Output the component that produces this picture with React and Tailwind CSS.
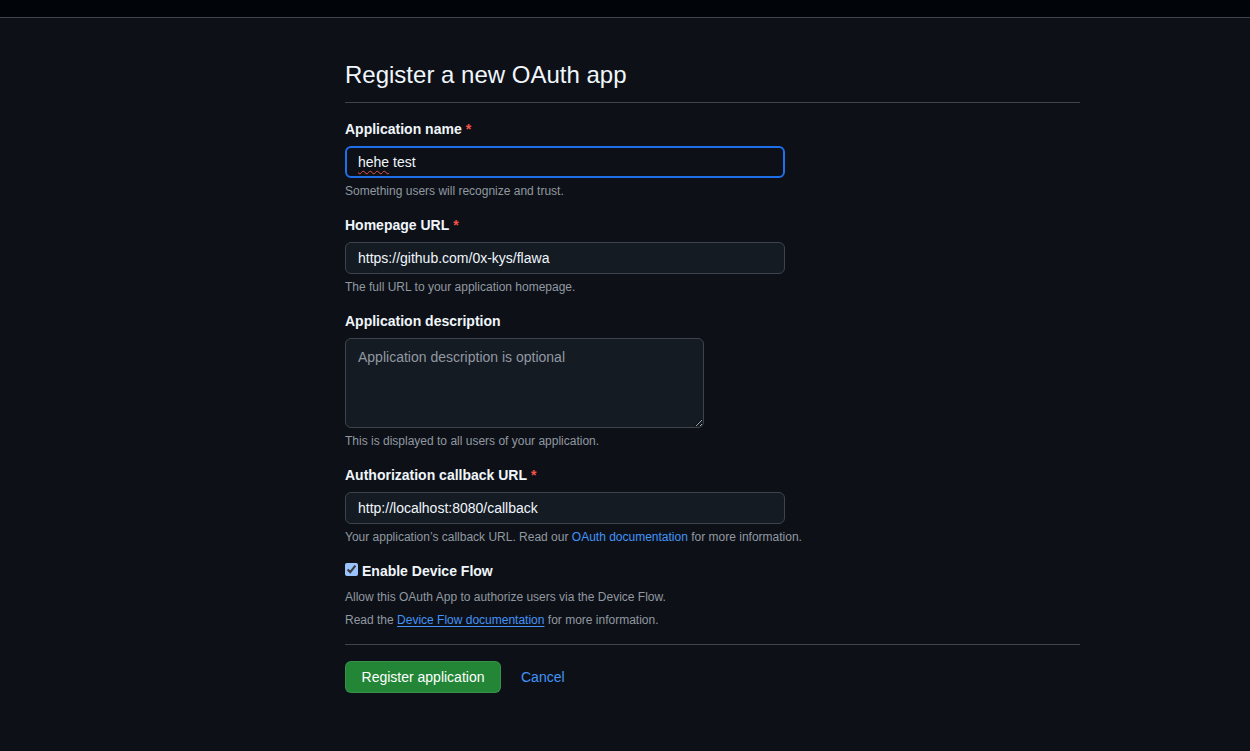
import React from 'react'

function Label({ children, required }) {
  return (
    <div className="h-5 leading-5 text-sm font-semibold text-[#f0f6fc] mb-[7px]">
      {children}
      {required && <span className="text-[#f85149] ml-1">*</span>}
    </div>
  );
}

function Note({ children }) {
  return <p className="mt-1 h-[18px] leading-[18px] text-xs text-[#9198a1]">{children}</p>;
}

function Field({ label, required, value, note }) {
  return (
    <div className="mb-[15px]">
      <Label required={required}>{label}</Label>
      <input
        readOnly
        value={value}
        className="block w-[440px] h-8 px-3 rounded-md border border-[#3d444d] bg-[#151b23] text-sm text-[#f0f6fc] outline-none"
      />
      <Note>{note}</Note>
    </div>
  );
}

export default function App() {
  return (
    <div className="min-h-[751px] bg-[#0d1117] font-['Liberation_Sans',Arial,sans-serif]">
      {/* Top bar */}
      <div className="h-[18px] bg-[#010409] border-b border-[#3d444d]"></div>

      <div className="ml-[345px] w-[735px] pt-[39px]">
        <h1 className="text-2xl leading-9 font-normal text-[#f0f6fc] pb-[9px] border-b border-[#3d444d] mb-4">
          Register a new OAuth app
        </h1>

        {/* Application name (focused) */}
        <div className="mb-[15px]">
          <Label required>Application name</Label>
          <div className="flex items-center w-[440px] h-8 pl-[11px] pr-3 rounded-md border-2 border-[#1f6feb] bg-[#0d1117] text-sm text-[#f0f6fc]">
            <span className="underline decoration-wavy decoration-[#e5534b] decoration-1 underline-offset-[3px]">hehe</span>
            <span>&nbsp;test</span>
          </div>
          <Note>Something users will recognize and trust.</Note>
        </div>

        <Field
          label="Homepage URL"
          required
          value="https://github.com/0x-kys/flawa"
          note="The full URL to your application homepage."
        />

        {/* Description */}
        <div className="mb-[15px]">
          <Label>Application description</Label>
          <textarea
            readOnly
            placeholder="Application description is optional"
            className="block w-[359px] h-[90px] px-3 py-2 rounded-md border border-[#3d444d] bg-[#151b23] text-sm leading-5 text-[#f0f6fc] placeholder:text-[#9198a1] outline-none"
          />
          <Note>This is displayed to all users of your application.</Note>
        </div>

        {/* Callback */}
        <div className="mb-[15px]">
          <Label required>Authorization callback URL</Label>
          <input
            readOnly
            value="http://localhost:8080/callback"
            className="block w-[440px] h-8 px-3 rounded-md border border-[#3d444d] bg-[#151b23] text-sm text-[#f0f6fc] outline-none"
          />
          <Note>
            Your application’s callback URL. Read our{' '}
            <a href="#" className="text-[#4493f8]">OAuth documentation</a> for more information.
          </Note>
        </div>

        {/* Device flow */}
        <div>
          <label className="flex items-center h-5 leading-5 text-sm font-semibold text-[#f0f6fc]">
            <input
              type="checkbox"
              defaultChecked
              className="w-[13px] h-[13px] m-0 mr-1 -mt-[3px] accent-[#99c3ff]"
            />
            Enable Device Flow
          </label>
          <p className="mt-[7px] h-[18px] leading-[18px] text-xs text-[#9198a1]">
            Allow this OAuth App to authorize users via the Device Flow.
          </p>
          <p className="mt-[5px] h-[18px] leading-[18px] text-xs text-[#9198a1]">
            Read the{' '}
            <a href="#" className="text-[#4493f8] underline underline-offset-2">Device Flow documentation</a>{' '}
            for more information.
          </p>
        </div>

        <div className="mt-[15px] border-t border-[#3d444d] pt-4 flex items-center gap-5">
          <button className="h-8 w-[156px] rounded-md bg-[#238636] border border-[#f0f6fc1a] text-sm text-white">
            Register application
          </button>
          <a href="#" className="text-sm text-[#4493f8]">Cancel</a>
        </div>
      </div>
    </div>
  );
}
